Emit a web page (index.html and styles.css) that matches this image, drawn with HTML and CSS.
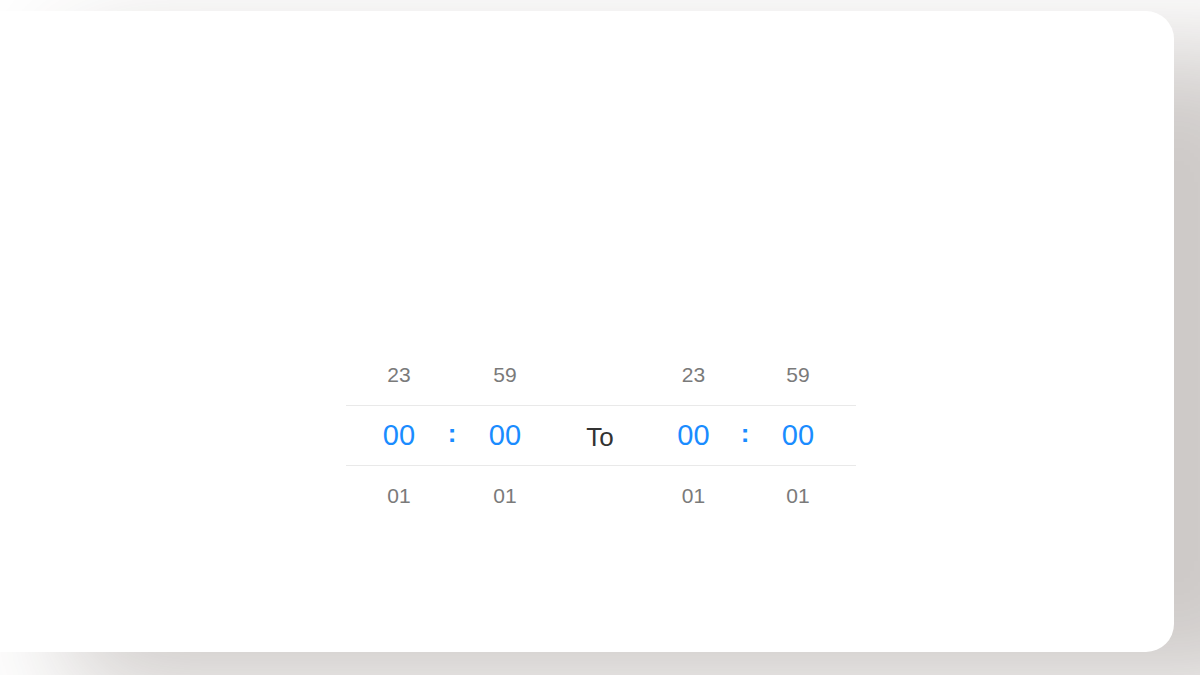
FILE: index.html
```html
<!DOCTYPE html>
<html lang="en">
<head>
<meta charset="utf-8">
<title>Time range picker</title>
<link rel="stylesheet" href="styles.css">
</head>
<body>
<div class="stage">
  <div class="card">
    <div class="picker">
      <div class="row">
        <div class="cell w106">23</div>
        <div class="cell w0"></div>
        <div class="cell w106">59</div>
        <div class="cell w84"></div>
        <div class="cell w103">23</div>
        <div class="cell w0"></div>
        <div class="cell w106">59</div>
      </div>
      <div class="row row-active">
        <div class="cell w106 active">00</div>
        <div class="cell w0 colon">:</div>
        <div class="cell w106 active">00</div>
        <div class="cell w84 to">To</div>
        <div class="cell w103 active">00</div>
        <div class="cell w0 colon">:</div>
        <div class="cell w106 active">00</div>
      </div>
      <div class="row">
        <div class="cell w106">01</div>
        <div class="cell w0"></div>
        <div class="cell w106">01</div>
        <div class="cell w84"></div>
        <div class="cell w103">01</div>
        <div class="cell w0"></div>
        <div class="cell w106">01</div>
      </div>
    </div>
  </div>
</div>
</body>
</html>
```

FILE: styles.css
```css
html, body {
  margin: 0;
  padding: 0;
  background: #ffffff;
  overflow: hidden;
  width: 1200px;
  height: 675px;
}

.stage {
  padding-top: 11px;
  font-family: "Liberation Sans", Arial, sans-serif;
}

.card {
  margin-left: -60px;
  width: 1234px;
  height: 641px;
  background: #ffffff;
  border-radius: 0 28px 28px 0;
  box-shadow: 130px 40px 110px rgba(60, 45, 35, 0.25);
  box-sizing: border-box;
  padding-left: 406px;
  padding-top: 334px;
}

.picker {
  width: 510px;
}

.row {
  display: flex;
  height: 60px;
}

.row-active {
  height: 59px;
  border-top: 1px solid #e9e9e9;
  border-bottom: 1px solid #e9e9e9;
}

.cell {
  display: flex;
  align-items: center;
  justify-content: center;
  flex: none;
  font-size: 21px;
  color: #7a7a7a;
  white-space: nowrap;
}

.w106 { width: 106px; }
.w103 { width: 103px; }
.w84 { width: 84px; }
.w0 { width: 0; }

.active {
  font-size: 29px;
  color: #1a8cff;
}

.colon {
  font-size: 26px;
  font-weight: bold;
  color: #1a8cff;
  padding-bottom: 5px;
}

.to {
  font-size: 26px;
  color: #333333;
  padding-top: 4px;
}
```
